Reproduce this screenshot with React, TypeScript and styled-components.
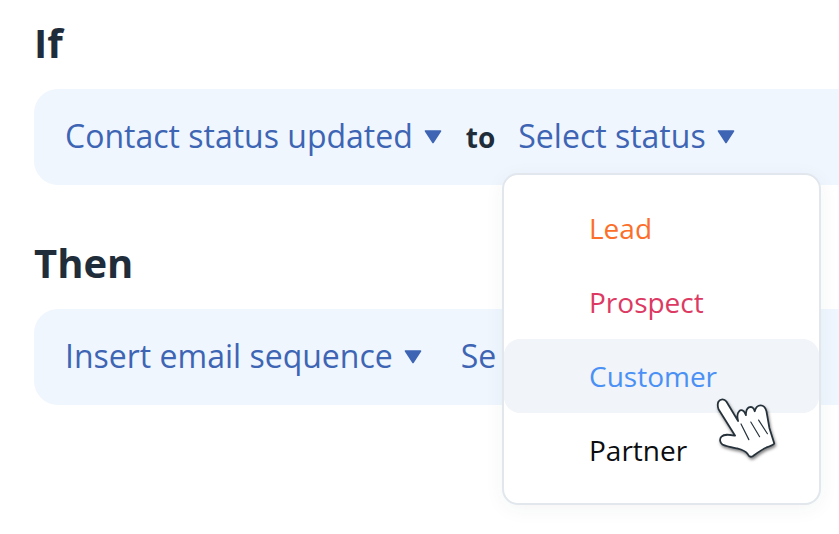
import React from "react";
import styled, { createGlobalStyle } from "styled-components";

const GlobalStyle = createGlobalStyle`
  html, body {
    margin: 0;
    background: #fff;
    overflow: hidden;
  }
`;

const Page = styled.div`
  position: relative;
  width: 839px;
  height: 534px;
  padding: 16px 0 0 34px;
  box-sizing: border-box;
  overflow: hidden;
  font-family: "Open Sans", "Liberation Sans", sans-serif;
`;

const Heading = styled.h2`
  margin: 0 0 19px;
  font-size: 40px;
  line-height: 54px;
  font-weight: 700;
  color: #1f2d3a;
`;

const RuleRow = styled.div<{ $gap: number }>`
  display: flex;
  align-items: center;
  gap: ${(props) => props.$gap}px;
  height: 96px;
  box-sizing: border-box;
  margin-bottom: 51px;
  padding: 0 0 3px 31px;
  border-radius: 24px 0 0 24px;
  background: #eff6fe;
`;

const Trigger = styled.div`
  display: flex;
  align-items: center;
  gap: 11px;
  font-size: 32px;
  color: #3e65b4;
  white-space: nowrap;
`;

const PartialLabel = styled.span`
  font-size: 32px;
  color: #3e65b4;
  white-space: nowrap;
`;

const Joiner = styled.span`
  margin: 3px -1px 0 0;
  font-size: 28px;
  font-weight: 700;
  color: #1f2d3a;
`;

const CaretIcon = styled.svg`
  flex-shrink: 0;
  margin-top: 3px;
`;

const Menu = styled.ul`
  position: absolute;
  left: 502px;
  top: 173px;
  width: 319px;
  height: 332px;
  box-sizing: border-box;
  margin: 0;
  padding: 16px 0;
  list-style: none;
  background: #fff;
  border: 2px solid #e1e7ec;
  border-radius: 16px;
  box-shadow: 0 4px 20px rgba(30, 50, 80, 0.05);
`;

const MenuItem = styled.li<{ $color: string; $active?: boolean }>`
  height: 74px;
  display: flex;
  align-items: center;
  padding-left: 85px;
  font-size: 28px;
  color: ${(props) => props.$color};
  background: ${(props) => (props.$active ? "#f1f4f8" : "transparent")};
  border-radius: 16px;
`;

const HandCursor = styled.svg`
  position: absolute;
  left: 688px;
  top: 379px;
  width: 108px;
  height: 88px;
  filter: drop-shadow(1px 2px 1.5px rgba(0, 0, 0, 0.5));
`;

const Caret = () => (
  <CaretIcon width="18" height="14" viewBox="0 0 18 14">
    <path
      d="M1.5 1h15L9 12.5z"
      fill="#3e65b4"
      stroke="#3e65b4"
      strokeWidth="1.6"
      strokeLinejoin="round"
    />
  </CaretIcon>
);

const statuses = [
  { name: "Lead", color: "#fb6f2a" },
  { name: "Prospect", color: "#dc3a63" },
  { name: "Customer", color: "#4a90f5", active: true },
  { name: "Partner", color: "#0b0d10" },
];

export default function App() {
  return (
    <>
      <GlobalStyle />
      <Page>
        <Heading>If</Heading>
        <RuleRow $gap={24}>
          <Trigger>
            Contact status updated <Caret />
          </Trigger>
          <Joiner>to</Joiner>
          <Trigger>
            Select status <Caret />
          </Trigger>
        </RuleRow>
        <Heading>Then</Heading>
        <RuleRow $gap={39}>
          <Trigger>
            Insert email sequence <Caret />
          </Trigger>
          <PartialLabel>Se</PartialLabel>
        </RuleRow>
        <Menu>
          {statuses.map((status) => (
            <MenuItem key={status.name} $color={status.color} $active={status.active}>
              {status.name}
            </MenuItem>
          ))}
        </Menu>
        <HandCursor viewBox="0 0 110 90">
          <path
            d="M31 23c2-3 6-3 8 0l12 20c-1-4-1-8 1-10 2-2 5-1 6 2l1 2c0-4 1-7 3-8 3-1 5 0 6 4 1-4 3-6 6-6 3 0 5 2 6 6l3 17 5 16c-2 2-5 3-8 4-5 2-10 6-14 9-2 1-4 0-5-2-2-3-7-5-11-6-5-1-11-2-15-4-3-2-3-6-1-8 3-3 8-2 14-1L31 31c-1-3-1-6 0-8z"
            fill="#fff"
            stroke="#26323b"
            strokeWidth="1.8"
            strokeLinejoin="round"
          />
          <path
            d="M54 46l8 16M64 44l9 15M72 42l9 14"
            fill="none"
            stroke="#26323b"
            strokeWidth="1.2"
            strokeLinecap="round"
          />
        </HandCursor>
      </Page>
    </>
  );
}
